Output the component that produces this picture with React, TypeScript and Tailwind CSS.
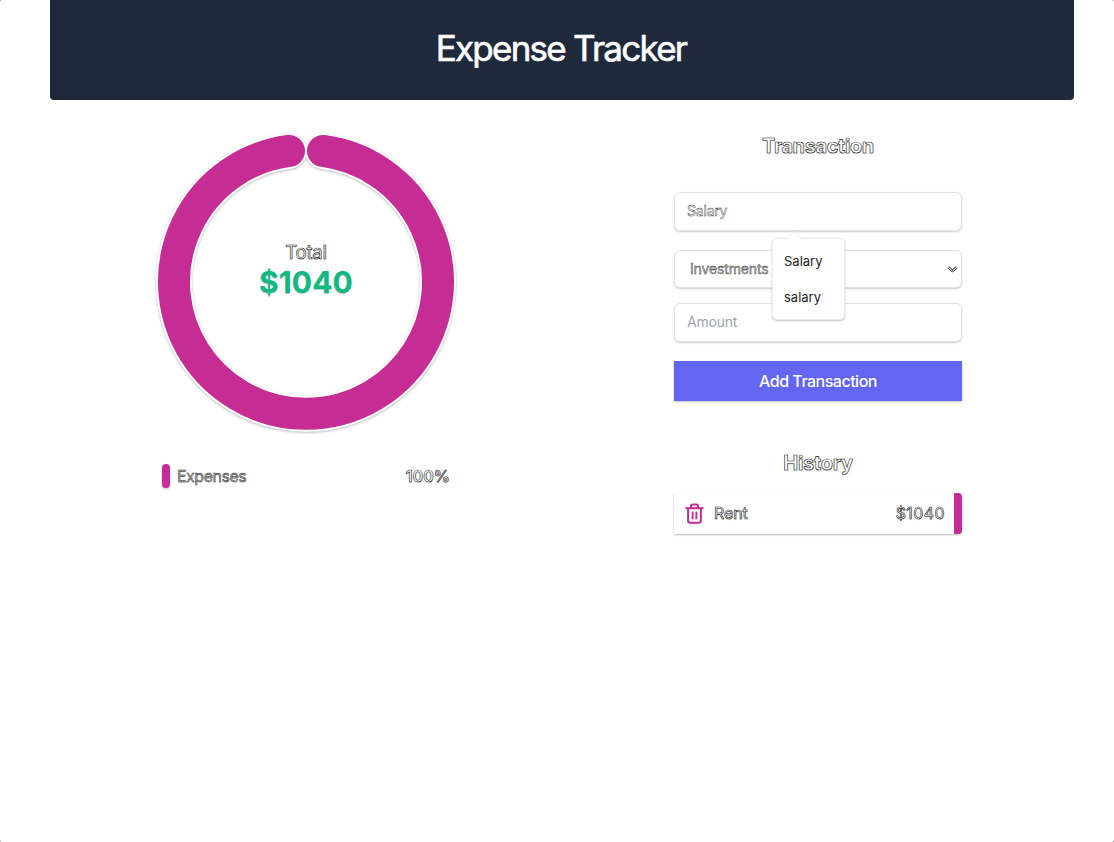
import React from 'react';

const outlined =
  'text-white [-webkit-text-stroke:0.6px_#161616] [text-shadow:0_1px_1px_rgba(0,0,0,0.15)]';
const field =
  'rounded-md border border-[#e2e2e4] bg-white shadow-[0_1px_2px_rgba(0,0,0,0.2)]';

function Donut() {
  const arc = 'M323 150.9 A132 132 0 1 1 289 150.9';
  return (
    <svg width="304" height="304" viewBox="154 130 304 304" fill="none" strokeLinecap="round">
      <path
        d={arc}
        stroke="#fff"
        strokeWidth="36"
        className="[filter:drop-shadow(0_1px_1px_rgba(0,0,0,0.28))]"
      />
      <path d={arc} stroke="#c52d95" strokeWidth="32" />
    </svg>
  );
}

function TrashIcon() {
  return (
    <svg width="24" height="24" viewBox="0 0.6 24 24" fill="none" stroke="#c52d95" strokeWidth="2">
      <path d="M2.4 6.8h18.2" />
      <path d="M5.1 7v12.4a2 2 0 0 0 2 2h8.8a2 2 0 0 0 2-2V7" />
      <path d="M8 7V4.6a1.6 1.6 0 0 1 1.6-1.6h3.8a1.6 1.6 0 0 1 1.6 1.6V7" />
      <path d="M9.6 10.3v7.6M13.4 10.3v7.6" strokeWidth="1.9" />
    </svg>
  );
}

function Summary() {
  return (
    <section className="ml-[104px] mt-[30px] w-[304px]">
      <div className="grid h-[304px]">
        <div className="col-start-1 row-start-1">
          <Donut />
        </div>
        <div className="col-start-1 row-start-1 pt-[107px] text-center">
          <h3 className={`text-[18.5px] leading-[30px] tracking-[-0.2px] ${outlined}`}>Total</h3>
          <div className="text-[30px] font-bold leading-[30px] tracking-[0.1px] text-[#10b981] [text-shadow:0_1px_1px_rgba(0,0,0,0.25)]">
            $1040
          </div>
        </div>
      </div>
      <div className="mt-[30px] flex h-6 items-center pl-2 pr-2">
        <span className="h-6 w-2 rounded bg-[#c52d95] shadow-[0_1px_2px_rgba(0,0,0,0.25)]" />
        <span className="ml-[7px] text-base tracking-[-0.5px] text-[#aaa] [-webkit-text-stroke:0.4px_#222] [text-shadow:0_1px_1px_rgba(0,0,0,0.12)]">
          Expenses
        </span>
        <span className={`ml-auto text-base font-semibold tracking-[0.1px] ${outlined}`}>100%</span>
      </div>
    </section>
  );
}

function Suggestions() {
  return (
    <div className="absolute left-[98px] top-[46px] z-10 h-[82px] w-[73px] rounded-[5px] border border-[#ececec] bg-white pl-[11px] pt-1 text-[13px] text-[#222] shadow-[0_1px_2px_rgba(0,0,0,0.25)]">
      <svg className="absolute left-[12px] top-[-8px]" width="18" height="9" viewBox="0 0 18 9">
        <path d="M0 9 L9 0.5 L18 9" fill="#fff" stroke="#e6e6e6" strokeWidth="0.8" />
      </svg>
      <div className="h-9 leading-9">Salary</div>
      <div className="h-9 leading-9">salary</div>
    </div>
  );
}

function TransactionForm() {
  return (
    <section className="mt-[30px]">
      <h2 className={`text-center text-xl font-bold leading-[32px] tracking-[-0.4px] ${outlined}`}>
        Transaction
      </h2>
      <div className="relative mt-[30px]">
        <div className={`flex h-[39px] items-center px-3 pb-[2px] text-sm tracking-[-0.2px] ${field}`}>
          <span className="text-white [-webkit-text-stroke:0.4px_#222]">Salary</span>
        </div>
        <Suggestions />
        <div className={`mt-[19px] flex h-[38px] items-center justify-between pl-[15px] pr-[3px] text-sm ${field}`}>
          <span className="tracking-[-0.15px] text-[#bbb] [-webkit-text-stroke:0.35px_#222]">
            Investments
          </span>
          <svg width="11" height="7" viewBox="0 0 11 7" fill="none">
            <path d="M1.2 1.2 L5.5 5 L9.8 1.2" stroke="#333" strokeWidth="2.4" />
            <path d="M1.2 1.2 L5.5 5 L9.8 1.2" stroke="#fff" strokeWidth="1" />
          </svg>
        </div>
        <div
          className={`mt-[15px] flex h-[39px] items-center px-3 pb-[2px] text-sm tracking-[-0.2px] text-[#9ca3af] ${field}`}
        >
          Amount
        </div>
        <button className="mt-[19px] h-10 w-full bg-[#6366f1] text-base font-medium tracking-[-0.5px] text-white shadow-[0_1px_2px_rgba(0,0,0,0.25)]">
          Add Transaction
        </button>
      </div>
    </section>
  );
}

function History() {
  return (
    <section className="mt-[46px]">
      <h2 className={`text-center text-xl font-bold leading-[32px] tracking-[-0.3px] ${outlined}`}>
        History
      </h2>
      <div className="mt-[14px] flex h-[41px] items-center rounded-r border-r-8 border-[#c52d95] bg-white pl-[9px] pr-[9px] shadow-[0_1px_2px_rgba(0,0,0,0.28)]">
        <TrashIcon />
        <span className={`ml-[7px] pb-[2px] text-base tracking-[-0.1px] ${outlined}`}>Rent</span>
        <span className={`ml-auto pb-[2px] text-base tracking-[0.4px] ${outlined}`}>$1040</span>
      </div>
    </section>
  );
}

export default function App() {
  return (
    <div className="bg-[#888]">
      <div className="h-[842px] overflow-hidden rounded-[2px] bg-white font-['Inter','Liberation_Sans',sans-serif]">
        <div className="ml-[50px] w-[1024px]">
          <header className="flex h-[100px] items-center justify-center rounded-b bg-[#1e293b]">
            <h1 className="pb-[5px] pr-[2px] text-[35px] leading-10 tracking-[-1.75px] text-white [-webkit-text-stroke:0.6px_#fff]">
              Expense Tracker
            </h1>
          </header>
          <main className="grid grid-cols-2">
            <Summary />
            <div className="ml-[112px] w-[288px]">
              <TransactionForm />
              <History />
            </div>
          </main>
        </div>
      </div>
    </div>
  );
}
